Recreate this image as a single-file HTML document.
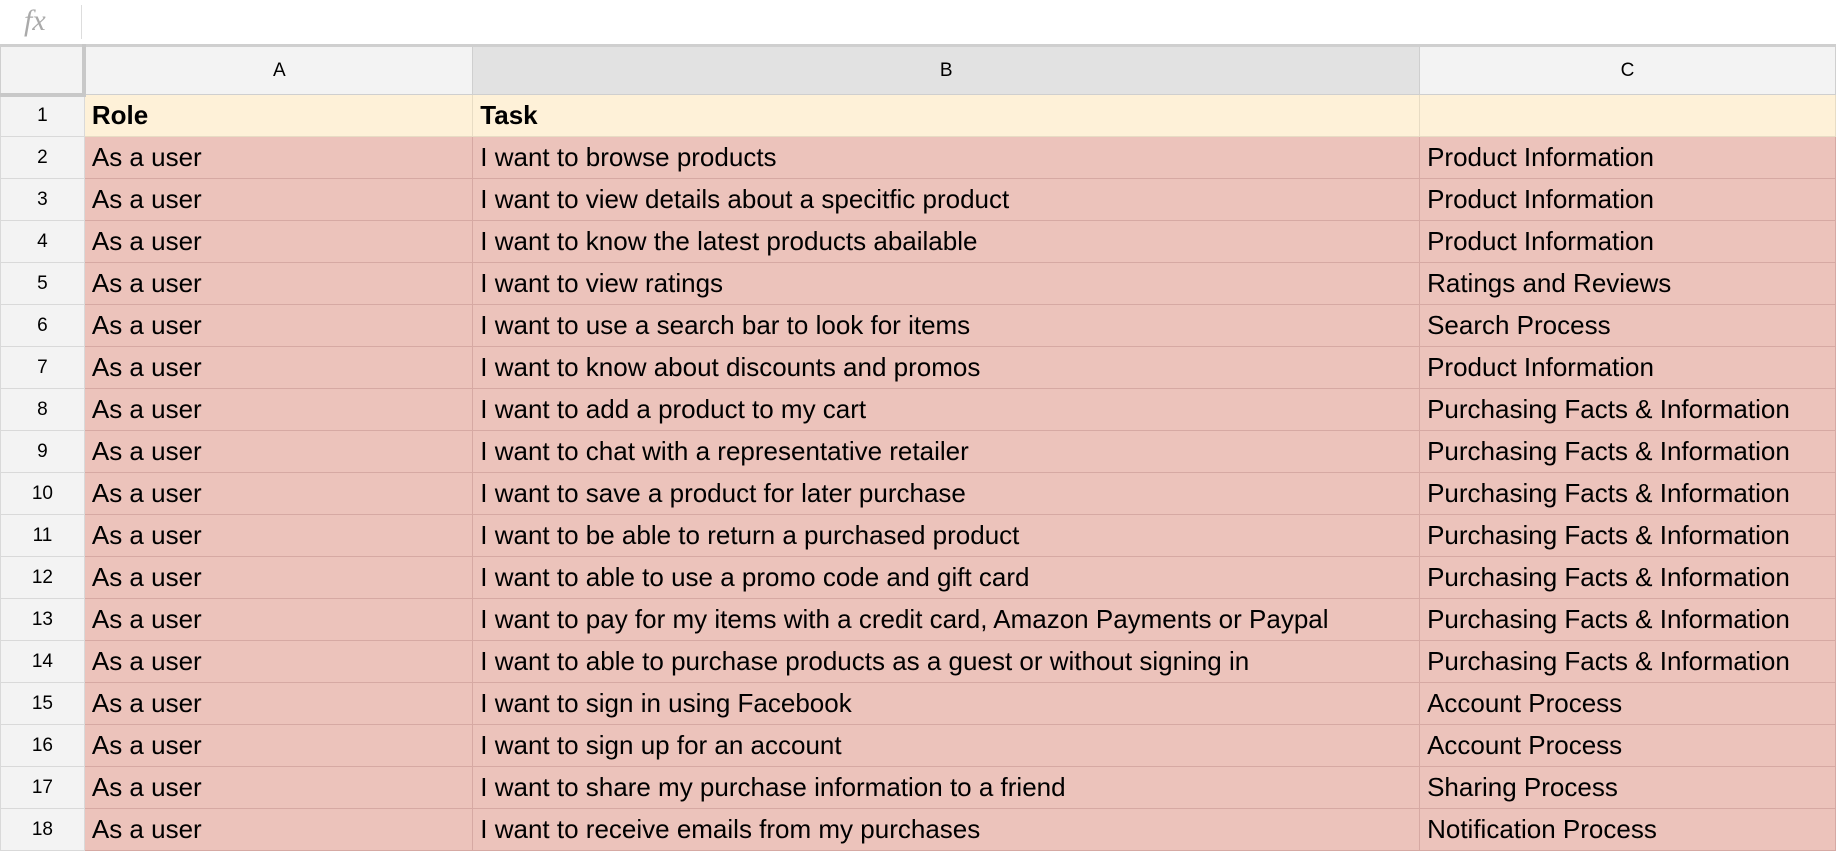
<!DOCTYPE html>
<html><head><style>
*{margin:0;padding:0;box-sizing:border-box}
body{width:1836px;height:848px;overflow:hidden;background:#fff;font-family:"Liberation Sans",Arial,sans-serif;position:relative}
.fx{position:absolute;left:24px;top:4px;font-family:"Liberation Serif",serif;font-style:italic;font-size:30px;color:#aaa}
.sep{position:absolute;left:81px;top:5px;width:1px;height:34px;background:#ddd}
table{position:absolute;top:44px;left:0;border-collapse:collapse;table-layout:fixed}
td{border:1px solid #d6a9a3;height:42px;font-size:26px;color:#000;padding:0 0 0 7px;white-space:nowrap;overflow:hidden;background:#ecc3bb}
tr.h td{height:49px;background:#f3f3f3;border:1px solid #cfcfcf;border-top:3px solid #cfcfcf;text-align:center;font-size:19px;padding:0}
tr.h td.b{background:#e2e2e2}
tr.h td.c0{border-right:4px solid #c8c8c8;border-bottom:4px solid #c8c8c8}
td.n{background:#f3f3f3;border:1px solid #d9d9d9;text-align:center;font-size:19px;padding:0}
tr.r1 td{background:#fef1d8;border-color:#e8dcc4;font-weight:bold}
tr.r1 td.n{background:#f3f3f3;font-weight:normal;border-color:#d9d9d9}
</style></head><body>
<div class="fx">fx</div><div class="sep"></div>
<table>
<colgroup><col style="width:84px"><col style="width:389px"><col style="width:947px"><col style="width:416px"></colgroup>
<tr class="h"><td class="c0"></td><td>A</td><td class="b">B</td><td>C</td></tr>
<tr class="r1"><td class="n">1</td><td>Role</td><td>Task</td><td></td></tr>
<tr><td class="n">2</td><td>As a user</td><td>I want to browse products</td><td>Product Information</td></tr>
<tr><td class="n">3</td><td>As a user</td><td>I want to view details about a specitfic product</td><td>Product Information</td></tr>
<tr><td class="n">4</td><td>As a user</td><td>I want to know the latest products abailable</td><td>Product Information</td></tr>
<tr><td class="n">5</td><td>As a user</td><td>I want to view ratings</td><td>Ratings and Reviews</td></tr>
<tr><td class="n">6</td><td>As a user</td><td>I want to use a search bar to look for items</td><td>Search Process</td></tr>
<tr><td class="n">7</td><td>As a user</td><td>I want to know about discounts and promos</td><td>Product Information</td></tr>
<tr><td class="n">8</td><td>As a user</td><td>I want to add a product to my cart</td><td>Purchasing Facts &amp; Information</td></tr>
<tr><td class="n">9</td><td>As a user</td><td>I want to chat with a representative retailer</td><td>Purchasing Facts &amp; Information</td></tr>
<tr><td class="n">10</td><td>As a user</td><td>I want to save a product for later purchase</td><td>Purchasing Facts &amp; Information</td></tr>
<tr><td class="n">11</td><td>As a user</td><td>I want to be able to return a purchased product</td><td>Purchasing Facts &amp; Information</td></tr>
<tr><td class="n">12</td><td>As a user</td><td>I want to able to use a promo code and gift card</td><td>Purchasing Facts &amp; Information</td></tr>
<tr><td class="n">13</td><td>As a user</td><td>I want to pay for my items with a credit card, Amazon Payments or Paypal</td><td>Purchasing Facts &amp; Information</td></tr>
<tr><td class="n">14</td><td>As a user</td><td>I want to able to purchase products as a guest or without signing in</td><td>Purchasing Facts &amp; Information</td></tr>
<tr><td class="n">15</td><td>As a user</td><td>I want to sign in using Facebook</td><td>Account Process</td></tr>
<tr><td class="n">16</td><td>As a user</td><td>I want to sign up for an account</td><td>Account Process</td></tr>
<tr><td class="n">17</td><td>As a user</td><td>I want to share my purchase information to a friend</td><td>Sharing Process</td></tr>
<tr><td class="n">18</td><td>As a user</td><td>I want to receive emails from my purchases</td><td>Notification Process</td></tr>
</table>
</body></html>
